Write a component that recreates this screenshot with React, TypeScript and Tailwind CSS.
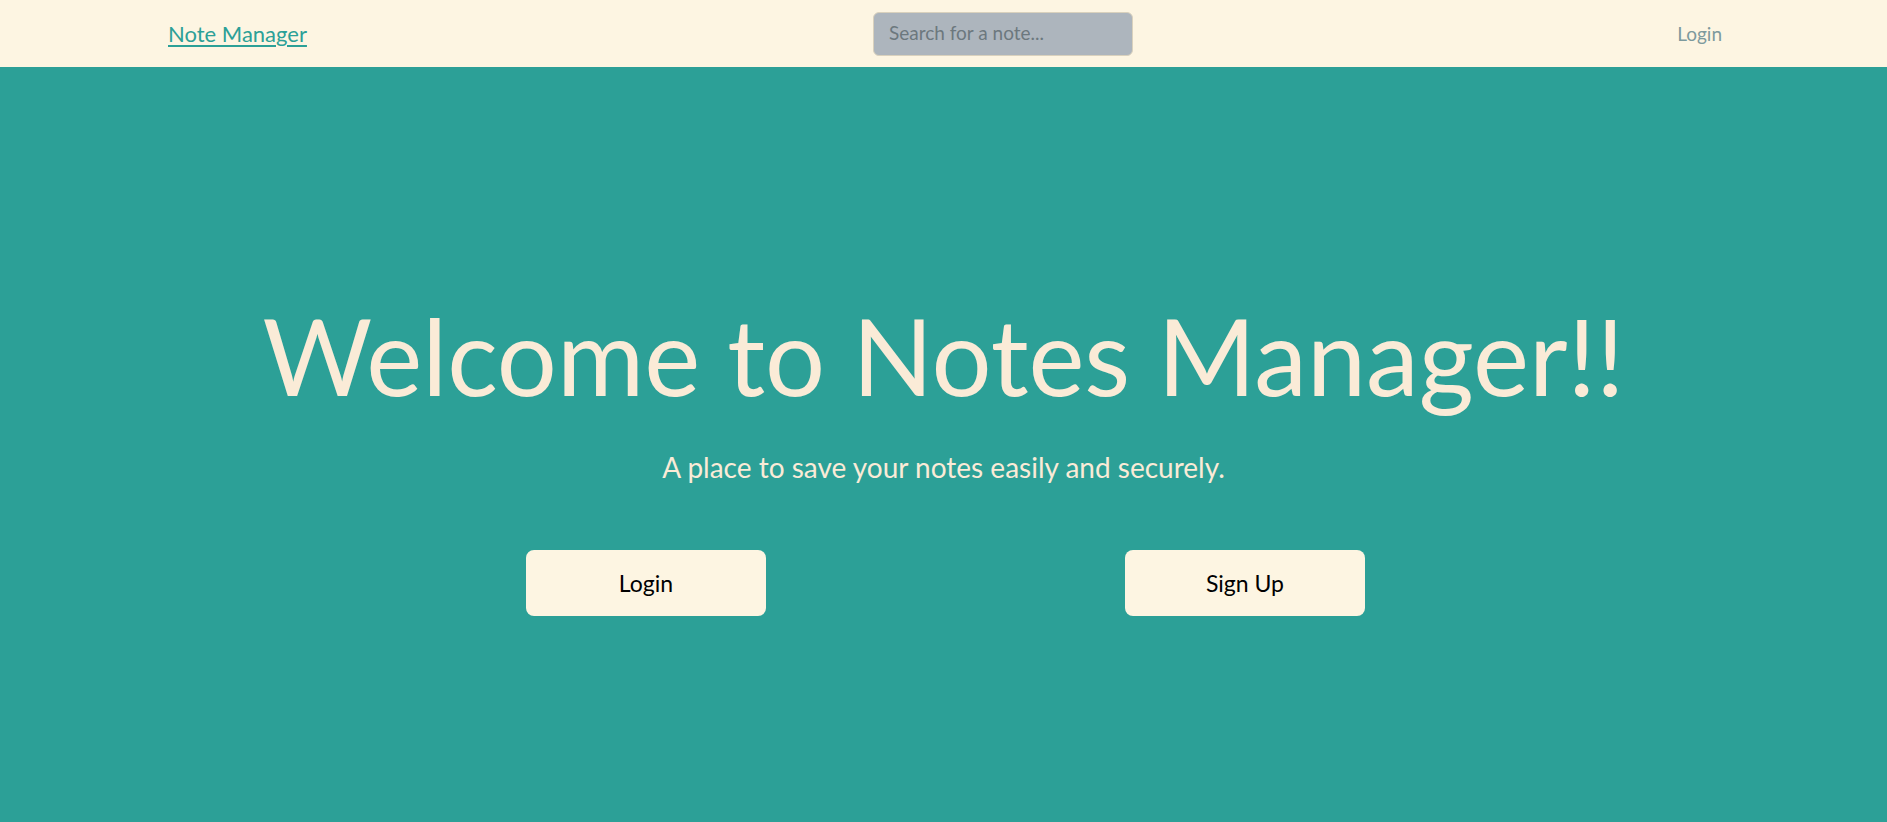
import React from "react";

export default function App() {
  return (
    <div
      className="w-full min-h-[822px] flex flex-col bg-[#2ca097]"
      style={{ fontFamily: "Lato, 'Noto Sans', sans-serif" }}
    >
      <header className="h-[67px] bg-[#fdf5e2] flex items-center pl-[168px] pr-[165px]">
        <a href="#" className="text-[22px] leading-none text-[#2ca097] underline underline-offset-[3px]">
          Note Manager
        </a>
        <div className="ml-[566px] w-[260px] h-[44px] rounded-[6px] bg-[#adb5bd] border border-[#d9d1bd] flex items-center pl-[15px]">
          <input
            type="text"
            placeholder="Search for a note..."
            className="w-full bg-transparent outline-none text-[19px] text-[#5f6a70] placeholder:text-[#6c787e]"
          />
        </div>
        <a href="#" className="ml-auto text-[19px] leading-none text-[#7d9a9d]">
          Login
        </a>
      </header>
      <main className="flex-1 flex flex-col items-center pt-[235px]">
        <h1 className="text-[106px] leading-none text-[#faebd7] font-normal">
          Welcome to Notes Manager!!
        </h1>
        <p className="mt-[45px] text-[28px] leading-none text-[#faebd7]">
          A place to save your notes easily and securely.
        </p>
        <div className="mt-[69px] ml-[4px] flex gap-[359px]">
          <button className="w-[240px] h-[66px] rounded-[8px] bg-[#fdf5e2] text-black text-[23px]">
            Login
          </button>
          <button className="w-[240px] h-[66px] rounded-[8px] bg-[#fdf5e2] text-black text-[23px]">
            Sign Up
          </button>
        </div>
      </main>
    </div>
  );
}
